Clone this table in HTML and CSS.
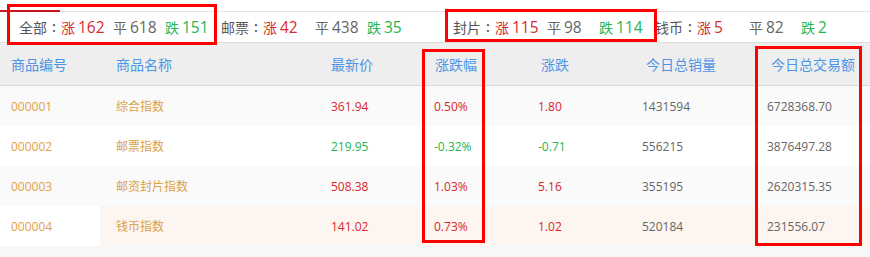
FILE: index.html
```html
<!DOCTYPE html>
<html lang="zh-CN">
<head>
<meta charset="utf-8">
<title>指数行情</title>
<link rel="stylesheet" href="styles.css">
</head>
<body>
<div class="page">
  <div class="rule"><span class="rule-active"></span><span class="rule-rest"></span></div>
  <div class="stats">
    <div class="group">
      <span class="label">全部<span class="colon">:</span></span>
      <span class="item up">涨<span class="n">162</span></span>
      <span class="item flat">平<span class="n">618</span></span>
      <span class="item down">跌<span class="n">151</span></span>
    </div>
    <div class="group group-wide">
      <span class="label">邮票<span class="colon">:</span></span>
      <span class="item up">涨<span class="n">42</span></span>
      <span class="item flat">平<span class="n">438</span></span>
      <span class="item down">跌<span class="n">35</span></span>
    </div>
    <div class="group">
      <span class="label">封片<span class="colon">:</span></span>
      <span class="item up">涨<span class="n">115</span></span>
      <span class="item flat">平<span class="n">98</span></span>
      <span class="item down">跌<span class="n">114</span></span>
    </div>
    <div class="group">
      <span class="label">钱币<span class="colon">:</span></span>
      <span class="item up">涨<span class="n">5</span></span>
      <span class="item flat">平<span class="n">82</span></span>
      <span class="item down">跌<span class="n">2</span></span>
    </div>
  </div>
  <div class="table">
    <div class="thead">
      <span>商品编号</span><span>商品名称</span><span>最新价</span><span>涨跌幅</span><span>涨跌</span><span>今日总销量</span><span>今日总交易额</span>
    </div>
    <div class="row odd">
      <span class="code">000001</span><span class="code">综合指数</span><span class="up">361.94</span><span class="up">0.50%</span><span class="up">1.80</span><span class="plain">1431594</span><span class="plain">6728368.70</span>
    </div>
    <div class="row">
      <span class="code">000002</span><span class="code">邮票指数</span><span class="down">219.95</span><span class="down">-0.32%</span><span class="down">-0.71</span><span class="plain">556215</span><span class="plain">3876497.28</span>
    </div>
    <div class="row odd">
      <span class="code">000003</span><span class="code">邮资封片指数</span><span class="up">508.38</span><span class="up">1.03%</span><span class="up">5.16</span><span class="plain">355195</span><span class="plain">2620315.35</span>
    </div>
    <div class="row hl">
      <span class="code">000004</span><span class="code">钱币指数</span><span class="up">141.02</span><span class="up">0.73%</span><span class="up">1.02</span><span class="plain">520184</span><span class="plain">231556.07</span>
    </div>
  </div>
  <div class="mark mark-1"></div>
  <div class="mark mark-2"></div>
  <div class="mark mark-3"></div>
  <div class="mark mark-4"></div>
</div>
</body>
</html>
```
FILE: styles.css
```css
html, body {
  margin: 0;
  padding: 0;
  background: #f7f7f7;
}
body {
  font-family: "Open Sans", "Noto Sans CJK SC", sans-serif;
  color: #666;
}
.page {
  position: relative;
  width: 870px;
  height: 257px;
  background: #f7f7f7;
}
.rule {
  display: flex;
  align-items: flex-end;
  height: 12px;
  background: #fff;
}
.rule-active {
  width: 60px;
  height: 2px;
  background: #c8161e;
}
.rule-rest {
  flex: 1;
  height: 1px;
  background: #e3e3e3;
}
.stats {
  display: flex;
  align-items: center;
  height: 30px;
  padding-left: 19px;
  background: #fff;
  border-bottom: 1px solid #dcdcdc;
  font-size: 14px;
  white-space: nowrap;
}
.group {
  display: flex;
  align-items: center;
  margin-right: 4px;
}
.group-wide {
  margin-right: 34px;
}
.label {
  display: flex;
  width: 42px;
  color: #555;
  font-family: "Noto Sans CJK SC", sans-serif;
}
.colon {
  width: 14px;
  text-align: center;
  font-family: "Open Sans", sans-serif;
  font-weight: 600;
}
.item {
  width: 52px;
  font-family: "Noto Sans CJK SC", sans-serif;
}
.item .n {
  font-family: "Open Sans", sans-serif;
  font-size: 15.5px;
  margin-left: 3px;
}
.item.up { color: #d52a30; }
.item.flat { color: #666; }
.item.down { color: #27b552; }

.table {
  background: #fff;
}
.thead, .row {
  display: grid;
  align-items: center;
}
.thead {
  grid-template-columns: 105px 215px 104px 106px 105px 125px 1fr;
  height: 42px;
  background: #eeeeee;
  border-bottom: 1px solid #dcdcdc;
  font-family: "Noto Sans CJK SC", sans-serif;
  font-size: 14px;
  color: #4d95e6;
}
.row {
  grid-template-columns: 105px 215px 103px 104px 104px 125px 1fr;
  height: 40px;
  font-size: 12px;
  background: #fff;
}
.thead span, .row span {
  padding-left: 11px;
}
.row.odd { background: #fafafa; }
.row.hl { background: linear-gradient(to right, #fff 100px, #fdf5f0 100px); }
.row .code { color: #dba24a; }
.row .up { color: #d9262f; }
.row .down { color: #23b54f; }
.row .plain { color: #666; }

.mark {
  position: absolute;
  border: 3px solid #ff0000;
  box-sizing: border-box;
}
.mark-1 { left: 7px; top: 4px; width: 210px; height: 41px; }
.mark-2 { left: 445px; top: 9px; width: 212px; height: 33px; }
.mark-3 { left: 422px; top: 49px; width: 63px; height: 194px; }
.mark-4 { left: 755px; top: 46px; width: 107px; height: 200px; }
```
